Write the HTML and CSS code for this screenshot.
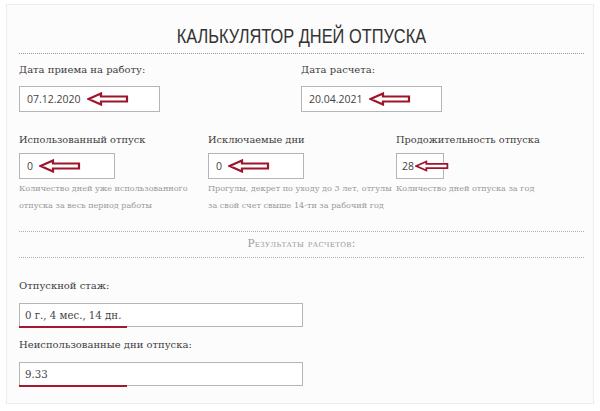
FILE: index.html
```html
<!DOCTYPE html>
<html lang="ru">
<head>
<meta charset="utf-8">
<link rel="stylesheet" href="styles.css">
</head>
<body>
<div class="card">
  <h1 class="title"><span class="title-text">КАЛЬКУЛЯТОР ДНЕЙ ОТПУСКА</span></h1>
  <div class="row row-two">
    <div class="field">
      <div class="label">Дата приема на работу:</div>
      <div class="input w140"><span>07.12.2020</span><svg class="arrow" viewBox="0 0 42 14" width="42" height="14"><path d="M1.5 7 L14 1.5 L14 4.5 L40 4.5 L40 9.5 L14 9.5 L14 12.5 Z"/></svg></div>
    </div>
    <div class="field">
      <div class="label">Дата расчета:</div>
      <div class="input w140"><span>20.04.2021</span><svg class="arrow" viewBox="0 0 42 14" width="42" height="14"><path d="M1.5 7 L14 1.5 L14 4.5 L40 4.5 L40 9.5 L14 9.5 L14 12.5 Z"/></svg></div>
    </div>
  </div>
  <div class="row row-three">
    <div class="field">
      <div class="label">Использованный отпуск</div>
      <div class="input w95"><span>0</span><svg class="arrow" viewBox="0 0 42 14" width="42" height="14"><path d="M1.5 7 L14 1.5 L14 4.5 L40 4.5 L40 9.5 L14 9.5 L14 12.5 Z"/></svg></div>
      <div class="hint">Количество дней уже использованного<br>отпуска за весь период работы</div>
    </div>
    <div class="field">
      <div class="label">Исключаемые дни</div>
      <div class="input w95"><span>0</span><svg class="arrow" viewBox="0 0 42 14" width="42" height="14"><path d="M1.5 7 L14 1.5 L14 4.5 L40 4.5 L40 9.5 L14 9.5 L14 12.5 Z"/></svg></div>
      <div class="hint">Прогулы, декрет по уходу до 3 лет, отгулы<br>за свой счет свыше 14-ти за рабочий год</div>
    </div>
    <div class="field">
      <div class="label">Продожительность отпуска</div>
      <div class="input w48 tight"><span>28</span><svg class="arrow" viewBox="0 0 42 14" width="34" height="14"><path d="M1.5 7 L14 1.5 L14 4.5 L40 4.5 L40 9.5 L14 9.5 L14 12.5 Z"/></svg></div>
      <div class="hint">Количество дней отпуска за год</div>
    </div>
  </div>
  <div class="results-head">Результаты расчетов:</div>
  <div class="result">
    <div class="label">Отпускной стаж:</div>
    <div class="input wide underline"><span class="val">0 г., 4 мес., 14 дн.</span></div>
  </div>
  <div class="result">
    <div class="label">Неиспользованные дни отпуска:</div>
    <div class="input wide underline"><span class="val">9.33</span></div>
  </div>
</div>
</body>
</html>
```
FILE: styles.css
```css
html, body {
  margin: 0;
  padding: 0;
  background: #ffffff;
}
body {
  padding: 4px 6px 0 6px;
  font-family: "DejaVu Serif", "Liberation Serif", serif;
}
.card {
  box-sizing: border-box;
  width: 588px;
  height: 400px;
  border: 1px solid #ececec;
  background: #fcfcfc;
  padding: 0 9px 0 12px;
}
.title {
  margin: 21px 0 0 0;
  padding-bottom: 7px;
  border-bottom: 1px dotted #9a9a9a;
  text-align: center;
  font-family: "Liberation Sans", Arial, sans-serif;
  font-weight: normal;
  font-size: 19.5px;
  line-height: 20px;
  color: #333;
}
.title-text {
  display: inline-block;
  transform: scaleX(0.84);
  transform-origin: center;
}
.row {
  display: grid;
}
.row-two {
  grid-template-columns: 282px 1fr;
  margin-top: 9px;
}
.row-three {
  grid-template-columns: 189px 188px 1fr;
  margin-top: 21px;
}
.label {
  font-size: 10px;
  line-height: 14px;
  color: #3c3c3c;
  margin-bottom: 9px;
}
.row-three .label {
  margin-bottom: 6px;
  font-size: 9.8px;
}
.input {
  box-sizing: border-box;
  display: flex;
  align-items: center;
  gap: 6px;
  height: 26px;
  border: 1px solid #b5b5b5;
  background: #fff;
  padding: 0 7px;
  font-family: "Open Sans", "Liberation Sans", sans-serif;
  font-size: 10.5px;
  color: #444;
  position: relative;
}
.w140 { width: 141px; }
.w95 { width: 96px; }
.w48 { width: 48px; }
.tight { padding: 0 0 0 5px; gap: 1px; overflow: visible; }
.tight .arrow { margin-right: -8px; }
.arrow {
  fill: #fff;
  stroke: #9e1529;
  stroke-width: 2.2;
  stroke-linejoin: miter;
  flex-shrink: 0;
}
.hint {
  margin-top: 1px;
  font-size: 8.1px;
  line-height: 17px;
  color: #9a9a9a;
  white-space: nowrap;
}
.results-head {
  margin-top: 17px;
  border-top: 1px dotted #b0b0b0;
  border-bottom: 1px dotted #b0b0b0;
  height: 25px;
  line-height: 23px;
  text-align: center;
  font-variant: small-caps;
  font-size: 10.5px;
  letter-spacing: 0.3px;
  color: #9a9a9a;
}
.result .label {
  margin-bottom: 10px;
}
.results-head + .result { margin-top: 21px; }
.result + .result { margin-top: 11px; }
.wide {
  width: 284px;
  height: 24px;
  padding: 0 5px;
  font-family: "DejaVu Serif", serif;
  font-size: 10.2px;
}
.underline::after {
  content: "";
  position: absolute;
  left: -1px;
  bottom: -2px;
  width: 108px;
  height: 2px;
  background: #a5182d;
}
.val { padding-top: 1px; }
```
